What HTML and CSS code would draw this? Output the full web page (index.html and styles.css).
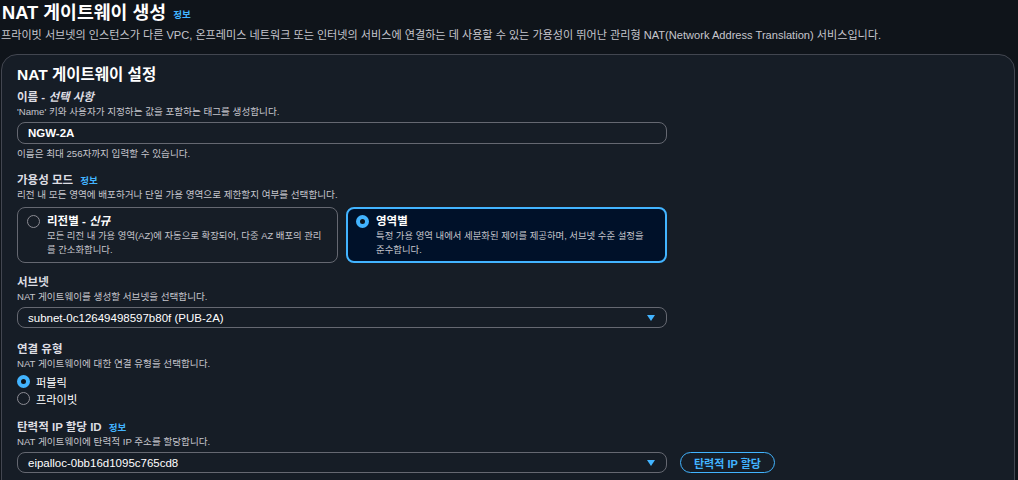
FILE: index.html
```html
<!DOCTYPE html>
<html lang="ko">
<head>
<meta charset="utf-8">
<title>NAT 게이트웨이 생성</title>
<link rel="stylesheet" href="styles.css">
</head>
<body>
<div class="page">
  <h1 class="title">NAT 게이트웨이 생성 <a class="info">정보</a></h1>
  <p class="page-desc">프라이빗 서브넷의 인스턴스가 다른 VPC, 온프레미스 네트워크 또는 인터넷의 서비스에 연결하는 데 사용할 수 있는 가용성이 뛰어난 관리형 NAT(Network Address Translation) 서비스입니다.</p>

  <section class="card">
    <h2 class="card-title">NAT 게이트웨이 설정</h2>

    <div class="field">
      <div class="label">이름 - <i>선택 사항</i></div>
      <div class="hint">'Name' 키와 사용자가 지정하는 값을 포함하는 태그를 생성합니다.</div>
      <div class="input"><span class="value strong">NGW-2A</span></div>
      <div class="constraint">이름은 최대 256자까지 입력할 수 있습니다.</div>
    </div>

    <div class="field">
      <div class="label">가용성 모드 <a class="info">정보</a></div>
      <div class="hint">리전 내 모든 영역에 배포하거나 단일 가용 영역으로 제한할지 여부를 선택합니다.</div>
      <div class="tiles">
        <div class="tile">
          <span class="radio"></span>
          <div class="tile-body">
            <div class="tile-label">리전별 - <i>신규</i></div>
            <div class="tile-desc">모든 리전 내 가용 영역(AZ)에 자동으로 확장되어, 다중 AZ 배포의 관리를 간소화합니다.</div>
          </div>
        </div>
        <div class="tile selected">
          <span class="radio checked"></span>
          <div class="tile-body">
            <div class="tile-label">영역별</div>
            <div class="tile-desc">특정 가용 영역 내에서 세분화된 제어를 제공하며, 서브넷 수준 설정을 준수합니다.</div>
          </div>
        </div>
      </div>
    </div>

    <div class="field wide-gap">
      <div class="label">서브넷</div>
      <div class="hint">NAT 게이트웨이를 생성할 서브넷을 선택합니다.</div>
      <div class="input select"><span class="value">subnet-0c12649498597b80f (PUB-2A)</span><span class="caret"></span></div>
    </div>

    <div class="field radios">
      <div class="label">연결 유형</div>
      <div class="hint">NAT 게이트웨이에 대한 연결 유형을 선택합니다.</div>
      <div class="radio-group">
        <div class="radio-row"><span class="radio checked"></span><span>퍼블릭</span></div>
        <div class="radio-row"><span class="radio"></span><span>프라이빗</span></div>
      </div>
    </div>

    <div class="field">
      <div class="label">탄력적 IP 할당 ID <a class="info">정보</a></div>
      <div class="hint">NAT 게이트웨이에 탄력적 IP 주소를 할당합니다.</div>
      <div class="select-row">
        <div class="input select"><span class="value">eipalloc-0bb16d1095c765cd8</span><span class="caret"></span></div>
        <button class="btn">탄력적 IP 할당</button>
      </div>
    </div>
  </section>
</div>
</body>
</html>
```
FILE: styles.css
```css
* { box-sizing: border-box; }
html, body { margin: 0; padding: 0; }
body {
  background: #0f141a;
  color: #dedee3;
  font-family: "Liberation Sans", "Noto Sans CJK KR", sans-serif;
  font-size: 11.1px;
  overflow: hidden;
}
.page {
  padding: 0 3px 0 1px;
}
.title {
  margin: 0;
  padding-left: 1px;
  font-size: 18.3px;
  line-height: 25px;
  font-weight: 700;
  color: #ffffff;
}
.info {
  color: #42b4ff;
  font-size: 9.5px;
  font-weight: 700;
  margin-left: 2px;
  vertical-align: 1px;
}
.page-desc {
  margin: 0;
  line-height: 16px;
  color: #c6c6cd;
}
.card {
  margin-top: 11px;
  background: #161d26;
  border: 1px solid #424650;
  border-radius: 16px;
  padding: 9px 16px 20px 15px;
  height: 460px;
}
.card-title {
  margin: 0 0 4px;
  font-size: 15.5px;
  line-height: 22px;
  font-weight: 700;
  color: #ffffff;
}
.field { margin-bottom: 12px; }
.field.wide-gap { margin-bottom: 14px; }
.field.radios { margin-bottom: 13px; }
.label {
  font-size: 11.5px;
  font-weight: 700;
  line-height: 15px;
  color: #dedee3;
}
.label .info { font-size: 9.5px; margin-left: 4px; vertical-align: 0; }
.hint, .constraint {
  font-size: 9.6px;
  line-height: 14px;
  color: #c6c6cd;
}
.input {
  width: 650px;
  height: 22px;
  margin-top: 3px;
  border: 1px solid #656871;
  border-radius: 8px;
  padding: 0 10px;
  display: flex;
  align-items: center;
  justify-content: space-between;
  color: #ffffff;
  font-size: 11.5px;
}
.value.strong { font-weight: 700; }
.constraint { margin-top: 3px; }
.select { height: 21px; }
.caret {
  width: 0; height: 0;
  border-left: 4px solid transparent;
  border-right: 4px solid transparent;
  border-top: 6px solid #42b4ff;
  margin-right: 1px;
}
.tiles {
  display: flex;
  gap: 8px;
  margin-top: 5px;
  width: 650px;
}
.tile {
  flex: 1;
  height: 56px;
  border: 1px solid #656871;
  border-radius: 8px;
  padding: 6px 12px 0 9px;
  display: flex;
  gap: 7px;
  align-items: flex-start;
}
.tile.selected {
  border: 2px solid #42b4ff;
  background: #001129;
  padding: 5px 11px 0 8px;
}
.tile .radio { margin-top: 1px; }
.tile-label { font-size: 11.5px; font-weight: 700; line-height: 15px; color: #ffffff; }
.tile-label i { font-style: italic; }
.tile-desc { font-size: 9.4px; line-height: 14px; color: #c6c6cd; }
.radio {
  flex: none;
  display: inline-block;
  width: 13px; height: 13px;
  border-radius: 50%;
  border: 1.5px solid #8c8c94;
}
.radio.checked {
  border: 4px solid #42b4ff;
  background: #0f141a;
}
.radio-group { margin-top: 2px; }
.radio-row {
  display: flex;
  align-items: center;
  gap: 6px;
  height: 17px;
  font-size: 11.2px;
  color: #ffffff;
}
.select-row {
  display: flex;
  align-items: center;
  gap: 13px;
  margin-top: 3px;
}
.select-row .input { margin-top: 0; }
.btn {
  height: 21px;
  padding: 0 13px;
  border: 1.5px solid #42b4ff;
  border-radius: 12px;
  background: transparent;
  color: #42b4ff;
  font-family: inherit;
  font-size: 11px;
  font-weight: 700;
}
```
